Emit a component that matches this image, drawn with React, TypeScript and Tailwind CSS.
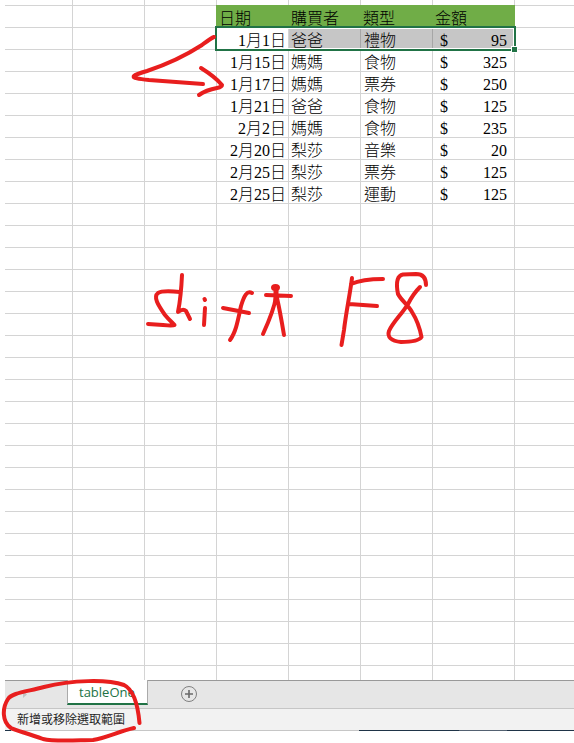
import React from "react";

const rows = [
  ["1月1日", "爸爸", "禮物", "95"],
  ["1月15日", "媽媽", "食物", "325"],
  ["1月17日", "媽媽", "票券", "250"],
  ["1月21日", "爸爸", "食物", "125"],
  ["2月2日", "媽媽", "食物", "235"],
  ["2月20日", "梨莎", "音樂", "20"],
  ["2月25日", "梨莎", "票券", "125"],
  ["2月25日", "梨莎", "運動", "125"],
];

const columns = "grid grid-rows-[100%] grid-cols-[68px_72px_72px_72px_72px_72px_82px_59px]";
const line = "border-r border-b border-[#d4d4d4]";
const text = "whitespace-nowrap leading-[22px]";

function EmptyRow({ height }: { height: string }) {
  return (
    <div className={`${columns} ${height}`}>
      {[0, 1, 2, 3, 4, 5, 6].map((i) => (
        <div key={i} className={line} />
      ))}
      <div className="border-b border-[#d4d4d4]" />
    </div>
  );
}

function HeaderRow() {
  return (
    <div className={`${columns} h-[22px]`}>
      <div className={line} />
      <div className={line} />
      <div className="border-b border-[#d4d4d4]" />
      {["日期", "購買者", "類型", "金額"].map((label, i) => (
        <div
          key={label}
          className={`relative -ml-px -mt-px bg-[#70ad47] ${i === 3 ? "w-[83px]" : "w-[73px]"}`}
        >
          <div className={`${text} pl-[3px] pt-[3px]`}>{label}</div>
        </div>
      ))}
      <div className="border-b border-[#d4d4d4]" />
    </div>
  );
}

function DataRow({ row, selected }: { row: string[]; selected: boolean }) {
  const cell = selected ? "bg-[#c6c6c6] border-r border-b border-[#a6a6a6]" : line;
  return (
    <div className={`${columns} h-[22px]`}>
      <div className={line} />
      <div className={line} />
      <div className={line} />
      <div className={`${line} ${text} pr-[2px] pt-[2px] text-right`}>{row[0]}</div>
      <div className={`${cell} ${text} pl-[2px] pt-[2px]`}>{row[1]}</div>
      <div className={`${cell} ${text} pl-[3px] pt-[2px]`}>{row[2]}</div>
      <div className={`${cell} ${text} flex justify-between px-[7px] pt-[2px]`}>
        <span>$</span>
        <span>{row[3]}</span>
      </div>
      <div className="border-b border-[#d4d4d4]" />
    </div>
  );
}

export default function App() {
  return (
    <div className="relative h-[743px] w-[574px] overflow-hidden bg-white pl-[5px] text-black">
      <div className="h-[680px] overflow-hidden text-[16px] font-light [font-family:'Liberation_Serif','Noto_Sans_CJK_TC',serif]">
        <EmptyRow height="h-[6px]" />
        <HeaderRow />
        {rows.map((row, i) => (
          <DataRow key={i} row={row} selected={i === 0} />
        ))}
        {Array.from({ length: 22 }, (_, i) => (
          <EmptyRow key={i} height="h-[22px]" />
        ))}
      </div>

      <div className="flex h-[29px] border-b border-t border-b-[#c6c6c6] border-t-[#999999] bg-[#e6e6e6]">
        <div className="w-[62px] pl-[18px] pt-[10px]">
          <svg width="4" height="7" viewBox="0 0 4 7">
            <path d="M0 0L4 3.500L0 7Z" fill="#c2c2c2" />
          </svg>
        </div>
        <div className="-mt-px h-[25px] w-[81px] border-b-2 border-l border-r border-b-[#217346] border-x-[#aaaaaa] bg-white pl-[11px] text-[13px] leading-[24px] text-[#217346] [font-family:'Open_Sans',sans-serif]">
          tableOne
        </div>
        <svg className="ml-[32px] mt-[4px]" width="18" height="18" viewBox="0 0 18 18" fill="none">
          <circle cx="9" cy="9" r="7.5" stroke="#808080" />
          <path d="M9 5v8M5 9h8" stroke="#6a6a6a" strokeWidth="1.600" />
        </svg>
      </div>

      <div className="h-[21px] bg-[#f2f2f2] pl-[12px] text-[12px] leading-[20px] text-[#262626] [font-family:'Noto_Sans_CJK_TC',sans-serif]">
        新增或移除選取範圍
      </div>
      <div className="flex h-px">
        <div className="w-[6px] bg-[#1f3448]" />
        <div className="w-[348px] bg-[#c6c6c6]" />
        <div className="w-[100px] bg-[#1f3448]" />
        <div className="w-[48px] bg-[#536171]" />
        <div className="flex-1 bg-[#1f3448]" />
      </div>

      <div className="absolute left-[215px] top-[26px] h-[25px] w-[301px] border-2 border-[#217346]">
        <div className="h-full border border-white" />
        <div className="absolute -bottom-[4px] -right-[4px] h-[7px] w-[7px] border border-white bg-[#217346]" />
      </div>

      <svg
        className="absolute left-0 top-0"
        width="574"
        height="743"
        viewBox="0 0 574 743"
        fill="none"
        stroke="#e81e1e"
        strokeWidth="4"
        strokeLinecap="round"
        strokeLinejoin="round"
      >
        <path d="M214 37C211 38 206 42 202 45C185 56 165 65 147 71C140 73 135 75 134 76C132 78 139 79 149 80L203 84" />
        <path d="M201 68C209 73 217 79 222 85Q222 87 217 88Q206 90 199 95" />
        <path d="M180 292C171 291 161 291 158 293C153 297 158 305 165 315C169 320 174 324 174.500 325Q173 326 163 325L148 324" />
        <path d="M182 275Q181 297 178 312Q183 308 186 311L190 319" />
        <path d="M204.500 299L205 300M205 308L204 325" />
        <path d="M252 293C247 290 244 296 241 306C238 320 236 332 230 340M223 308L249 313" />
        <path d="M266 295L291 296M276 297C274 310 268 323 263 334M277 298C280 311 282 323 284 335" />
        <ellipse cx="275.500" cy="287.500" rx="2.500" ry="1.500" fill="#e81e1e" />
        <path d="M276 288L276 300" strokeWidth="5" />
        <path d="M352 278C350 294 346 313 344 330L341.500 345M351 284C360 280 370 279 383 279M349 304L377 306" />
        <path d="M426 285C426 277 422 274 416 274L403 274.500C396 276 396 284 398 294C401 300 408 305 412 312C417 320 420 329 421.500 337C419 341 410 342 401 342C391 341 387 337 389 331C393 322 402 314 408 304C412 296 416 291 420 287" />
        <path d="M139.500 723C138 706 134 690 124 685C107 679 72 680 44 687C25 692 12 693 8 699C2 708 2 722 11 728C17 731 27 733 43 739C55 742 80 740 93 740C106 738 120 731 134 728" />
      </svg>
    </div>
  );
}
